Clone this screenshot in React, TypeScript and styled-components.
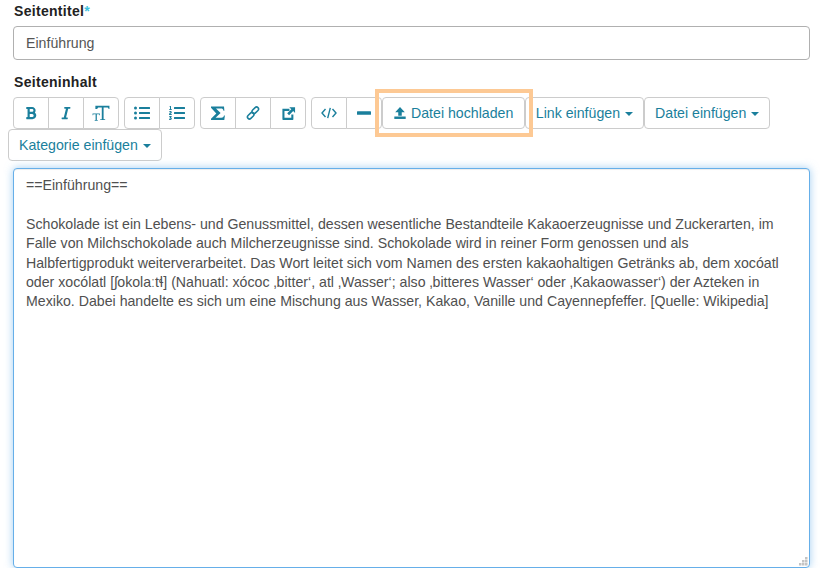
import React from 'react';
import styled, { createGlobalStyle } from 'styled-components';
import { FaBold, FaItalic, FaListUl, FaListOl } from 'react-icons/fa';

const Global = createGlobalStyle`
  html, body {
    margin: 0;
    background: #fff;
    font-family: "Liberation Sans", Arial, sans-serif;
    font-size: 14px;
  }
`;

const BRAND = '#1a7f9c';
const FONT = '14.17px "Liberation Sans", Arial, sans-serif';

const Page = styled.div`
  display: flex;
  flex-direction: column;
  width: 797px;
  padding: 4px 0 0 13px;
`;

const Label = styled.label`
  display: block;
  height: 22px;
  padding-left: 1px;
  line-height: 15px;
  font-size: 14px;
  font-weight: 700;
  letter-spacing: 0.3px;
  color: #222;
`;

const Required = styled.span`
  color: #3cc3e0;
`;

const TitleInput = styled.input`
  box-sizing: border-box;
  display: block;
  width: 797px;
  height: 34px;
  margin-bottom: 15px;
  padding: 0 12px;
  border: 1px solid #b0b0b0;
  border-radius: 4px;
  outline: none;
  font: ${FONT};
  color: #555;
`;

const Toolbar = styled.div`
  display: flex;
  flex-wrap: wrap;
  width: 810px;
  margin: 0 0 7px -5px;
`;

const Group = styled.div`
  display: flex;
  margin-left: 5px;
`;

const FlushGroup = styled.div`
  display: flex;
`;

const Button = styled.button<{ $square?: boolean }>`
  box-sizing: border-box;
  display: inline-flex;
  align-items: center;
  justify-content: center;
  gap: 5px;
  height: 32px;
  width: ${({ $square }) => ($square ? '36px' : 'auto')};
  padding: ${({ $square }) => ($square ? '0' : '0 10px')};
  margin: 0;
  border: 1px solid #ccc;
  border-radius: 4px;
  background: #fff;
  font: ${FONT};
  color: ${BRAND};

  ${Group} > &:not(:first-child) {
    border-top-left-radius: 0;
    border-bottom-left-radius: 0;
    margin-left: -1px;
  }
  ${Group} > &:not(:last-child) {
    border-top-right-radius: 0;
    border-bottom-right-radius: 0;
  }
`;

const UploadButton = styled(Button)`
  position: relative;
  gap: 4px;
  padding: 0 10.5px 0 10px;

  &::after {
    content: '';
    position: absolute;
    inset: -9px -9px -9px -8px;
    border: 4px solid #fdc994;
    pointer-events: none;
  }
`;

const Caret = styled.span`
  display: inline-block;
  width: 0;
  height: 0;
  margin-top: 2px;
  border-top: 4px solid ${BRAND};
  border-left: 4px solid transparent;
  border-right: 4px solid transparent;
`;

const EditorWrap = styled.div`
  position: relative;
  width: 797px;
  height: 400px;
`;

const ContentArea = styled.textarea`
  box-sizing: border-box;
  display: block;
  width: 100%;
  height: 100%;
  padding: 7px 1px 6px 12px;
  border: 1px solid #66afe9;
  border-radius: 4px;
  outline: none;
  resize: none;
  box-shadow: inset 0 1px 1px rgba(0, 0, 0, 0.075), 0 0 8px rgba(102, 175, 233, 0.6);
  font: 14.17px/19.4px "Liberation Sans", Arial, sans-serif;
  color: #505050;
`;

const Grip = styled.svg`
  position: absolute;
  right: 2px;
  bottom: 2px;
`;

const Glyph: React.FC<{ children: React.ReactNode; size?: number }> = ({ children, size = 16 }) => (
  <svg width={size} height={size} viewBox="0 0 16 16" fill={BRAND} aria-hidden="true">
    {children}
  </svg>
);

const TextSizeIcon = () => (
  <Glyph size={18}>
    <path d="M3 1.500h12.500v3h-.7c-.1-1-.5-1.500-1.500-1.500H10.300V13.500h1.400v.7H7.300v-.7h1.400V3H6.200C5.200 3 4.800 3.500 4.700 4.500H3z" />
    <path d="M.5 8.500h6.500v1.600h-.5c0-.6-.2-.9-.8-.9H4.300v5h.8v.6H2.400v-.6h.8v-5H1.800c-.6 0-.8.300-.8.900H.5z" />
  </Glyph>
);

const SigmaIcon = () => (
  <Glyph>
    <path d="M1 1.500h13l.4 4.200h-.9c-.3-1.500-1-2.100-2.600-2.100H6l4.600 4.400-5 4.700h5.700c1.600 0 2.300-.7 2.700-2.200h.9l-.6 4.500H1v-1.300l5.300-5.200L1 2.800z" />
  </Glyph>
);

const ChainIcon = () => (
  <Glyph>
    <g fill="none" stroke={BRAND} strokeWidth="1.500">
      <rect x="8.300" y="1.500" width="4" height="7.500" rx="2" transform="rotate(45 10.300 5.250)" />
      <rect x="3.700" y="7" width="4" height="7.500" rx="2" transform="rotate(45 5.700 10.750)" />
    </g>
  </Glyph>
);

const ExternalIcon = () => (
  <Glyph size={15}>
    <path d="M1.500 3h7.500v2.200H3.700v7.300H11V9h2.200v5c0 .5-.3.800-.8.800H2.300c-.5 0-.8-.3-.8-.8z" />
    <path d="M8.800 1.200H15v6.200l-2-2-4.400 4.400-2-2L11 3.400z" />
  </Glyph>
);

const CodeIcon = () => (
  <Glyph>
    <path
      d="M4.500 4L1 8l3.500 4M11.500 4L15 8l-3.500 4M9.300 2.800L6.700 13.200"
      fill="none"
      stroke={BRAND}
      strokeWidth="1.400"
    />
  </Glyph>
);

const MinusIcon = () => (
  <Glyph>
    <rect x="1" y="6.300" width="14" height="3.400" rx="0.500" />
  </Glyph>
);

const UploadIcon = () => (
  <Glyph size={14}>
    <path d="M8 1l5.500 6H10v4H6V7H2.500z" />
    <rect x="1.500" y="12" width="13" height="2.800" />
  </Glyph>
);

const GripIcon = () => (
  <Grip width="9" height="9" viewBox="0 0 9 9" fill="#c4c4c4">
    <rect x="6" y="0" width="2.500" height="2.500" />
    <rect x="3" y="3" width="2.500" height="2.500" />
    <rect x="6" y="3" width="2.500" height="2.500" />
    <rect x="0" y="6" width="2.500" height="2.500" />
    <rect x="3" y="6" width="2.500" height="2.500" />
    <rect x="6" y="6" width="2.500" height="2.500" />
  </Grip>
);

const pageText = `==Einführung==

Schokolade ist ein Lebens- und Genussmittel, dessen wesentliche Bestandteile Kakaoerzeugnisse und Zuckerarten, im
Falle von Milchschokolade auch Milcherzeugnisse sind. Schokolade wird in reiner Form genossen und als
Halbfertigprodukt weiterverarbeitet. Das Wort leitet sich vom Namen des ersten kakaohaltigen Getränks ab, dem xocóatl
oder xocólatl [ʃokolaːtɬ] (Nahuatl: xócoc ‚bitter‘, atl ‚Wasser‘; also ‚bitteres Wasser‘ oder ‚Kakaowasser‘) der Azteken in
Mexiko. Dabei handelte es sich um eine Mischung aus Wasser, Kakao, Vanille und Cayennepfeffer. [Quelle: Wikipedia]`;

export default function App() {
  return (
    <Page>
      <Global />
      <Label>
        Seitentitel<Required>*</Required>
      </Label>
      <TitleInput defaultValue="Einführung" />
      <Label>Seiteninhalt</Label>
      <Toolbar>
        <Group>
          <Button $square><FaBold size={14} /></Button>
          <Button $square><FaItalic size={14} /></Button>
          <Button $square><TextSizeIcon /></Button>
        </Group>
        <Group>
          <Button $square><FaListUl size={16} /></Button>
          <Button $square><FaListOl size={16} /></Button>
        </Group>
        <Group>
          <Button $square><SigmaIcon /></Button>
          <Button $square><ChainIcon /></Button>
          <Button $square><ExternalIcon /></Button>
        </Group>
        <Group>
          <Button $square><CodeIcon /></Button>
          <Button $square><MinusIcon /></Button>
        </Group>
        <FlushGroup>
          <UploadButton><UploadIcon />Datei hochladen</UploadButton>
          <Button>Link einfügen <Caret /></Button>
          <Button>Datei einfügen <Caret /></Button>
        </FlushGroup>
        <FlushGroup>
          <Button>Kategorie einfügen <Caret /></Button>
        </FlushGroup>
      </Toolbar>
      <EditorWrap>
        <ContentArea defaultValue={pageText} spellCheck={false} />
        <GripIcon />
      </EditorWrap>
    </Page>
  );
}
